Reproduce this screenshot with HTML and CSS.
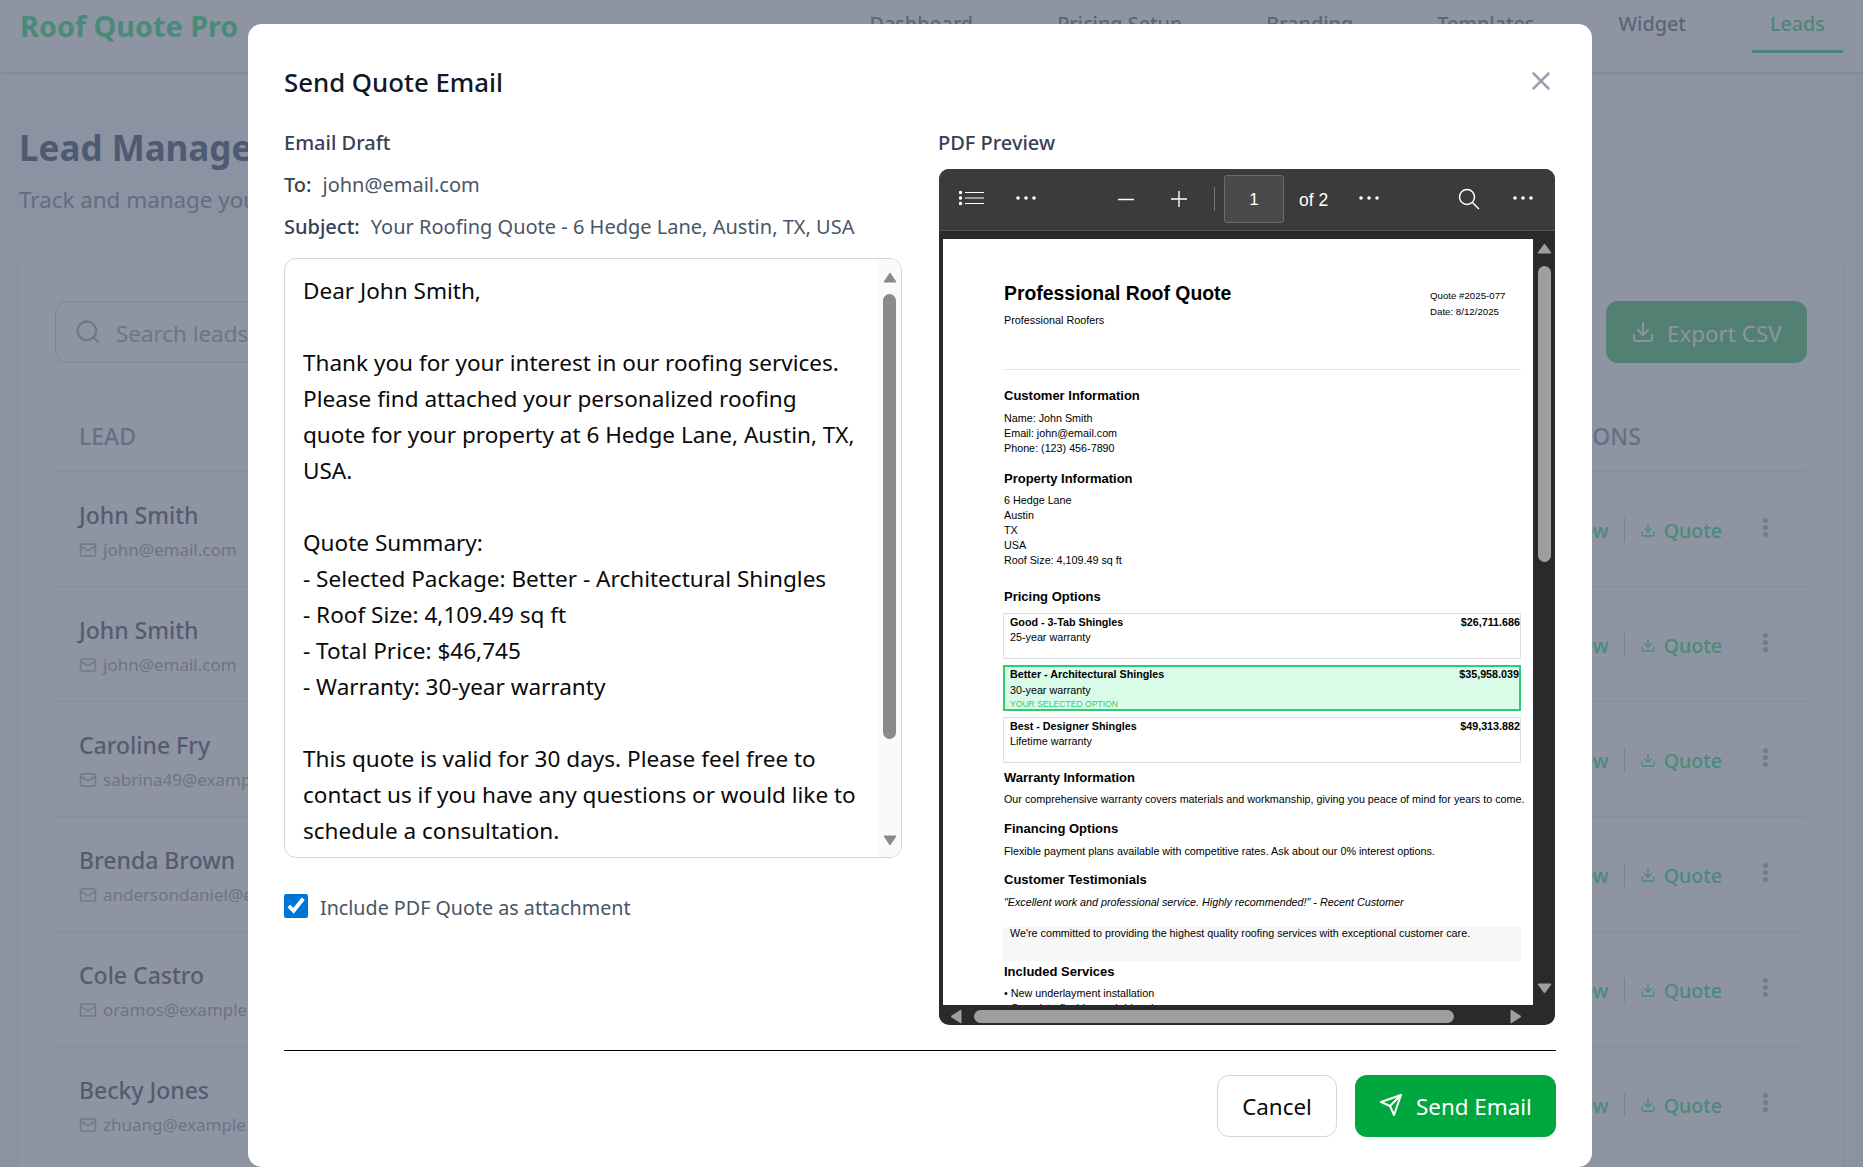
FILE: index.html
```html
<!DOCTYPE html>
<html lang="en">
<head>
<meta charset="utf-8">
<title>Roof Quote Pro</title>
<link rel="stylesheet" href="styles.css">
</head>
<body>
<header class="topbar">
  <div class="logo">Roof Quote Pro</div>
  <nav class="nav">
    <a class="nav-item">Dashboard</a>
    <a class="nav-item">Pricing Setup</a>
    <a class="nav-item">Branding</a>
    <a class="nav-item">Templates</a>
    <a class="nav-item">Widget</a>
    <a class="nav-item active">Leads</a>
  </nav>
</header>
<main class="main">
  <h1 class="page-title">Lead Management</h1>
  <p class="page-sub">Track and manage your leads</p>
  <section class="card">
    <div class="tools">
      <div class="search">
        <svg class="ico-search" viewBox="0 0 24 24"><circle cx="11" cy="11" r="8"/><path d="m21 21-4.3-4.3"/></svg>
        <span>Search leads...</span>
      </div>
      <button class="export">
        <svg class="ico-export" viewBox="0 0 24 24"><path d="M21 15v4a2 2 0 0 1-2 2H5a2 2 0 0 1-2-2v-4"/><path d="m7 10 5 5 5-5"/><path d="M12 15V3"/></svg>
        <span>Export CSV</span>
      </button>
    </div>
    <div class="thead"><span>LEAD</span><span>ACTIONS</span></div>
    <div class="row">
      <div class="lead"><div class="name">John Smith</div><div class="email"><svg class="ico-mail" viewBox="0 0 24 24"><rect x="2" y="4" width="20" height="16" rx="2"/><path d="m22 7-10 6L2 7"/></svg>john@email.com</div></div>
      <div class="actions"><span>View</span><i class="sep"></i><span class="quote"><svg class="ico-dl" viewBox="0 0 24 24"><path d="M21 15v4a2 2 0 0 1-2 2H5a2 2 0 0 1-2-2v-4"/><path d="m7 10 5 5 5-5"/><path d="M12 15V3"/></svg>Quote</span><i class="kebab"></i></div>
    </div>
    <div class="row">
      <div class="lead"><div class="name">John Smith</div><div class="email"><svg class="ico-mail" viewBox="0 0 24 24"><rect x="2" y="4" width="20" height="16" rx="2"/><path d="m22 7-10 6L2 7"/></svg>john@email.com</div></div>
      <div class="actions"><span>View</span><i class="sep"></i><span class="quote"><svg class="ico-dl" viewBox="0 0 24 24"><path d="M21 15v4a2 2 0 0 1-2 2H5a2 2 0 0 1-2-2v-4"/><path d="m7 10 5 5 5-5"/><path d="M12 15V3"/></svg>Quote</span><i class="kebab"></i></div>
    </div>
    <div class="row">
      <div class="lead"><div class="name">Caroline Fry</div><div class="email"><svg class="ico-mail" viewBox="0 0 24 24"><rect x="2" y="4" width="20" height="16" rx="2"/><path d="m22 7-10 6L2 7"/></svg>sabrina49@example.com</div></div>
      <div class="actions"><span>View</span><i class="sep"></i><span class="quote"><svg class="ico-dl" viewBox="0 0 24 24"><path d="M21 15v4a2 2 0 0 1-2 2H5a2 2 0 0 1-2-2v-4"/><path d="m7 10 5 5 5-5"/><path d="M12 15V3"/></svg>Quote</span><i class="kebab"></i></div>
    </div>
    <div class="row">
      <div class="lead"><div class="name">Brenda Brown</div><div class="email"><svg class="ico-mail" viewBox="0 0 24 24"><rect x="2" y="4" width="20" height="16" rx="2"/><path d="m22 7-10 6L2 7"/></svg>andersondaniel@example.com</div></div>
      <div class="actions"><span>View</span><i class="sep"></i><span class="quote"><svg class="ico-dl" viewBox="0 0 24 24"><path d="M21 15v4a2 2 0 0 1-2 2H5a2 2 0 0 1-2-2v-4"/><path d="m7 10 5 5 5-5"/><path d="M12 15V3"/></svg>Quote</span><i class="kebab"></i></div>
    </div>
    <div class="row">
      <div class="lead"><div class="name">Cole Castro</div><div class="email"><svg class="ico-mail" viewBox="0 0 24 24"><rect x="2" y="4" width="20" height="16" rx="2"/><path d="m22 7-10 6L2 7"/></svg>oramos@example.com</div></div>
      <div class="actions"><span>View</span><i class="sep"></i><span class="quote"><svg class="ico-dl" viewBox="0 0 24 24"><path d="M21 15v4a2 2 0 0 1-2 2H5a2 2 0 0 1-2-2v-4"/><path d="m7 10 5 5 5-5"/><path d="M12 15V3"/></svg>Quote</span><i class="kebab"></i></div>
    </div>
    <div class="row">
      <div class="lead"><div class="name">Becky Jones</div><div class="email"><svg class="ico-mail" viewBox="0 0 24 24"><rect x="2" y="4" width="20" height="16" rx="2"/><path d="m22 7-10 6L2 7"/></svg>zhuang@example.com</div></div>
      <div class="actions"><span>View</span><i class="sep"></i><span class="quote"><svg class="ico-dl" viewBox="0 0 24 24"><path d="M21 15v4a2 2 0 0 1-2 2H5a2 2 0 0 1-2-2v-4"/><path d="m7 10 5 5 5-5"/><path d="M12 15V3"/></svg>Quote</span><i class="kebab"></i></div>
    </div>
  </section>
</main>

<div class="overlay">
  <div class="modal">
    <div class="modal-head">
      <h2 class="modal-title">Send Quote Email</h2>
      <svg class="ico-close" viewBox="0 0 24 24"><path d="M18 6 6 18"/><path d="m6 6 12 12"/></svg>
    </div>
    <div class="columns">
      <div class="col">
        <div class="label">Email Draft</div>
        <div class="meta"><b>To:</b>john@email.com</div>
        <div class="meta subject"><b>Subject:</b>Your Roofing Quote - 6 Hedge Lane, Austin, TX, USA</div>
        <div class="draft">
          <div class="draft-text">Dear John Smith,<br><br>Thank you for your interest in our roofing services.<br>Please find attached your personalized roofing<br>quote for your property at 6 Hedge Lane, Austin, TX,<br>USA.<br><br>Quote Summary:<br>- Selected Package: Better - Architectural Shingles<br>- Roof Size: 4,109.49 sq ft<br>- Total Price: $46,745<br>- Warranty: 30-year warranty<br><br>This quote is valid for 30 days. Please feel free to<br>contact us if you have any questions or would like to<br>schedule a consultation.</div>
          <div class="draft-bar">
            <svg class="arrow-v" viewBox="0 0 14 11"><path d="M7 1 13 10H1Z"/></svg>
            <div class="draft-thumb"></div>
            <svg class="arrow-v" viewBox="0 0 14 11"><path d="M1 1H13L7 10Z"/></svg>
          </div>
        </div>
        <label class="attach"><input class="attach-box" type="checkbox" checked>Include PDF Quote as attachment</label>
      </div>
      <div class="col">
        <div class="label">PDF Preview</div>
        <div class="viewer">
          <div class="viewer-bar">
            <svg class="tb-list" viewBox="0 0 25 16"><path d="M6 2.5H25M6 8H25M6 13.5H25"/><circle cx="1.5" cy="2.5" r="1.2"/><circle cx="1.5" cy="8" r="1.2"/><circle cx="1.5" cy="13.5" r="1.2"/></svg>
            <svg class="tb-dots d1" viewBox="0 0 20 4"><circle cx="2" cy="2" r="1.8"/><circle cx="10" cy="2" r="1.8"/><circle cx="18" cy="2" r="1.8"/></svg>
            <svg class="tb-pm minus" viewBox="0 0 18 18"><path d="M1 9.5H17"/></svg>
            <svg class="tb-pm plus" viewBox="0 0 18 18"><path d="M1 9H17M9 1V17"/></svg>
            <i class="tb-sep"></i>
            <div class="tb-page">1</div>
            <div class="tb-of">of 2</div>
            <svg class="tb-dots d2" viewBox="0 0 20 4"><circle cx="2" cy="2" r="1.8"/><circle cx="10" cy="2" r="1.8"/><circle cx="18" cy="2" r="1.8"/></svg>
            <svg class="tb-search" viewBox="0 0 22 22"><circle cx="9" cy="9" r="7.5"/><path d="m14.5 14.5 6.5 6.5"/></svg>
            <svg class="tb-dots d3" viewBox="0 0 20 4"><circle cx="2" cy="2" r="1.8"/><circle cx="10" cy="2" r="1.8"/><circle cx="18" cy="2" r="1.8"/></svg>
          </div>
          <div class="viewer-body">
            <div class="viewer-main">
              <div class="page">
                <div class="doc-head">
                  <div>
                    <div class="doc-title">Professional Roof Quote</div>
                    <div class="doc-company">Professional Roofers</div>
                  </div>
                  <div class="doc-meta">Quote #2025-077<br>Date: 8/12/2025</div>
                </div>
                <hr class="doc-rule">
                <h3 class="doc-h roomy">Customer Information</h3>
                <p class="doc-p">Name: John Smith<br>Email: john@email.com<br>Phone: (123) 456-7890</p>
                <h3 class="doc-h gap-15">Property Information</h3>
                <p class="doc-p">6 Hedge Lane<br>Austin<br>TX<br>USA<br>Roof Size: 4,109.49 sq ft</p>
                <h3 class="doc-h gap-21 tight">Pricing Options</h3>
                <div class="opt"><div class="opt-row"><b>Good - 3-Tab Shingles</b><b>$26,711.686</b></div><div class="opt-sub">25-year warranty</div></div>
                <div class="opt selected"><div class="opt-row"><b>Better - Architectural Shingles</b><b>$35,958.039</b></div><div class="opt-sub">30-year warranty</div><div class="opt-tag">YOUR SELECTED OPTION</div></div>
                <div class="opt"><div class="opt-row"><b>Best - Designer Shingles</b><b>$49,313.882</b></div><div class="opt-sub">Lifetime warranty</div></div>
                <h3 class="doc-h gap-7">Warranty Information</h3>
                <p class="doc-p">Our comprehensive warranty covers materials and workmanship, giving you peace of mind for years to come.</p>
                <h3 class="doc-h gap-14 roomy">Financing Options</h3>
                <p class="doc-p">Flexible payment plans available with competitive rates. Ask about our 0% interest options.</p>
                <h3 class="doc-h gap-13 roomy">Customer Testimonials</h3>
                <p class="doc-p quote-line">"Excellent work and professional service. Highly recommended!" - Recent Customer</p>
                <div class="doc-box">We're committed to providing the highest quality roofing services with exceptional customer care.</div>
                <h3 class="doc-h gap-3">Included Services</h3>
                <p class="doc-p">• New underlayment installation<br>• Complete flashing and drip edge</p>
              </div>
              <div class="hbar">
                <svg class="arrow-h" viewBox="0 0 12 15"><path d="M11 1V14L1 7.5Z"/></svg>
                <div class="hthumb"></div>
                <svg class="arrow-h" viewBox="0 0 12 15"><path d="M1 1V14L11 7.5Z"/></svg>
              </div>
            </div>
            <div class="vbar">
              <svg class="arrow-pdf" viewBox="0 0 15 11"><path d="M7.5 1 14 10H1Z"/></svg>
              <div class="vthumb"></div>
              <svg class="arrow-pdf" viewBox="0 0 15 11"><path d="M1 1H14L7.5 10Z"/></svg>
            </div>
          </div>
        </div>
      </div>
    </div>
    <div class="modal-foot">
      <button class="btn-cancel">Cancel</button>
      <button class="btn-send"><svg class="ico-send" viewBox="0 0 24 24"><path d="m22 2-7 20-4-9-9-4Z"/><path d="M22 2 11 13"/></svg>Send Email</button>
    </div>
  </div>
</div>
</body>
</html>
```
FILE: styles.css
```css
* { box-sizing: border-box; }
html, body { margin: 0; height: 1167px; overflow: hidden; }
body { background: #f8fafc; font-family: "Noto Sans", "Liberation Sans", sans-serif; color: #111; }

/* background page */
.topbar { height: 72px; background: #fff; display: flex; justify-content: space-between; padding: 0 20px; box-shadow: 0 1px 3px rgba(0,0,0,.12); }
.logo { font-size: 28.8px; font-weight: 700; line-height: 52px; color: #76ebab; }
.nav { display: flex; gap: 48px; }
.nav-item { height: 53px; padding: 8px 18px 0; line-height: 32px; font-size: 19.8px; font-weight: 500; color: #9aa1ab; border-bottom: 3px solid transparent; }
.nav-item.active { color: #7ce3ab; border-bottom-color: #7ce3ab; }
.main { padding: 54px 20px 0 19px; }
.page-title { margin: 0; font-size: 35px; line-height: 44px; font-weight: 700; color: #808b9f; }
.page-sub { margin: 14px 0 0; font-size: 22.4px; line-height: 32px; color: #a9b0b8; }
.card { margin-top: 42px; padding: 43px 36px 40px; background: #fff; border-radius: 12px; box-shadow: 0 1px 3px rgba(0,0,0,.06); }
.tools { display: flex; justify-content: space-between; height: 62px; }
.search { width: 560px; display: flex; align-items: center; gap: 14px; padding: 2px 0 0 18px; border: 1px solid #dde1e6; border-radius: 12px; font-size: 22.4px; color: #bcc1c8; }
.ico-search { width: 28px; height: 28px; margin-top: -2px; fill: none; stroke: #c0c6cd; stroke-width: 2; }
.export { width: 201px; border: 0; border-radius: 12px; background: #86d7a1; color: #fafffb; font: 400 22.4px "Noto Sans", sans-serif; display: flex; align-items: center; gap: 12px; padding-left: 25px; }
.export span { padding-top: 2px; }
.ico-export { width: 24px; height: 24px; fill: none; stroke: #fafffb; stroke-width: 2; stroke-linecap: round; stroke-linejoin: round; flex: none; }
.thead { display: grid; grid-template-columns: 1fr 265px; margin-top: 61px; padding: 0 0 23px 24px; font-size: 23px; line-height: 24px; font-weight: 500; color: #b0b7bf; border-bottom: 1px solid #eef1f4; }
.row { display: grid; grid-template-columns: 1fr 259px; height: 115px; padding-left: 24px; border-bottom: 1px solid #eef1f4; }
.lead { padding-top: 29px; }
.name { font-size: 23px; line-height: 28px; font-weight: 500; color: #888f9d; }
.email { display: flex; align-items: center; gap: 6px; margin-top: 9px; font-size: 17px; line-height: 24px; color: #bbbfc6; }
.ico-mail { width: 18px; height: 18px; fill: none; stroke: #c4c8ce; stroke-width: 2; }
.actions { display: flex; justify-content: flex-end; align-items: center; padding: 2px 39px 0 0; font-size: 19.6px; font-weight: 500; color: #76ebab; }
.sep { width: 1px; height: 24px; margin: 0 15px; background: #d4d8dd; }
.quote { display: flex; align-items: center; gap: 8px; margin-right: 41px; }
.ico-dl { width: 16px; height: 16px; fill: none; stroke: #76ebab; stroke-width: 2; stroke-linecap: round; stroke-linejoin: round; }
.kebab { width: 5px; height: 5px; margin-bottom: 6px; border-radius: 50%; background: #c6cad0; box-shadow: 0 -7px 0 #c6cad0, 0 7px 0 #c6cad0; }

/* dialog */
.overlay { position: fixed; inset: 0; display: flex; justify-content: center; align-items: flex-start; padding: 24px 23px 0 0; background: rgba(30,41,69,.5); }
.modal { width: 1344px; height: 1143px; padding: 36px 36px 30px; background: #fff; border-radius: 14px; }
.modal-head { height: 44px; display: flex; justify-content: space-between; align-items: center; margin-bottom: 24px; }
.modal-title { margin: 0; font-size: 25.8px; line-height: 44px; font-weight: 500; color: #101828; }
.ico-close { width: 30px; height: 30px; margin: -2px 0 0 0; fill: none; stroke: #99a1af; stroke-width: 2; stroke-linecap: round; }
.columns { display: grid; grid-template-columns: 618px 618px; gap: 36px; height: 897px; }
.col { min-width: 0; }
.label { height: 30px; margin-bottom: 11px; font-size: 20px; line-height: 30px; font-weight: 500; color: #364153; }
.meta { height: 30px; font-size: 20px; line-height: 32px; color: #4a5565; }
.meta b { font-weight: 500; margin-right: 11px; color: #364153; }
.subject { margin-top: 12px; }
.draft { display: flex; height: 600px; margin-top: 17px; border: 1px solid #d1d5dc; border-radius: 12px; overflow: hidden; }
.draft-text { flex: 1; padding: 14px 0 0 18px; font-size: 22.55px; line-height: 36px; color: #0a0a0a; white-space: nowrap; }
.draft-bar { width: 23px; flex: none; background: #fafafa; display: flex; flex-direction: column; align-items: center; padding-top: 13px; }
.arrow-v { width: 14px; height: 11px; fill: #8a8a8a; stroke: #8a8a8a; stroke-width: 1; stroke-linejoin: round; }
.draft-thumb { width: 13px; height: 445px; margin: 11px 0 96px; border-radius: 7px; background: #8a8a8a; }
.attach { display: flex; align-items: center; gap: 12px; margin-top: 36px; height: 26px; font-size: 19.7px; color: #4a5565; }
.attach-box { width: 24px; height: 24px; margin: 0 0 2px; accent-color: #0075d8; }

/* pdf viewer */
.viewer { height: 856px; border-radius: 10px; overflow: hidden; background: #2a2a2a; margin: 0 1px; display: flex; flex-direction: column; font-family: "Liberation Sans", Arial, sans-serif; }
.viewer-bar { height: 62px; flex: none; position: relative; background: #3b3b3b; border-bottom: 1px solid #555; }
.viewer-bar > * { position: absolute; }
.tb-list { left: 20px; top: 21px; width: 25px; height: 16px; fill: #fff; stroke: #fff; stroke-width: 1.1; }
.tb-dots { top: 27px; width: 20px; height: 4px; fill: #fff; }
.d1 { left: 77px; }
.d2 { left: 420px; }
.d3 { left: 574px; }
.tb-pm { top: 21px; width: 18px; height: 18px; stroke: #fff; stroke-width: 1.4; fill: none; }
.minus { left: 178px; }
.plus { left: 231px; }
.tb-sep { left: 275px; top: 18px; width: 1px; height: 24px; background: #777; }
.tb-page { left: 285px; top: 6px; width: 60px; height: 48px; border: 1px solid #6b6b6b; border-radius: 3px; background: #4a4a4a; color: #fff; font-size: 17px; line-height: 48px; text-align: center; }
.tb-of { left: 360px; top: 17px; color: #fff; font-size: 17.5px; line-height: 28px; }
.tb-search { left: 519px; top: 19px; width: 22px; height: 22px; fill: none; stroke: #fff; stroke-width: 1.5; }
.viewer-body { flex: 1; display: flex; min-height: 0; }
.viewer-main { width: 594px; flex: none; display: flex; flex-direction: column; padding-left: 4px; }
.page { flex: none; height: 766px; margin-top: 8px; padding: 42px 12px 0 61px; background: #fff; overflow: hidden; color: #000; }
.doc-head { display: flex; justify-content: space-between; height: 88px; }
.doc-title { font-size: 19.4px; line-height: 24px; font-weight: 700; }
.doc-company { margin-top: 8px; font-size: 10.8px; line-height: 15px; }
.doc-meta { width: 91px; margin-top: 7px; font-size: 9.7px; line-height: 16px; white-space: nowrap; }
.doc-rule { margin: 0 0 18px; height: 1px; border: 0; background: #e3e3e3; }
.doc-h { margin: 0 0 6px; font-size: 13px; line-height: 16px; font-weight: 700; }
.doc-h.roomy { margin-bottom: 7px; }
.doc-h.tight { margin-bottom: 8px; }
.gap-3 { margin-top: 3px; }
.gap-7 { margin-top: 7px; }
.gap-13 { margin-top: 13px; }
.gap-14 { margin-top: 14px; }
.gap-15 { margin-top: 15px; }
.gap-21 { margin-top: 21px; }
.doc-p { margin: 0; font-size: 10.75px; line-height: 15px; white-space: nowrap; }
.quote-line { font-style: italic; }
.opt { height: 46px; margin-bottom: 6px; margin-left: -1px; padding: 1px 0 0 6px; border: 1px solid #ddd; font-size: 10.75px; line-height: 15px; }
.opt-row { display: flex; justify-content: space-between; }
.opt.selected { padding-top: 0; border: 2px solid #2ecc71; padding-left: 5px; padding-right: 0; background: #d9fbe8; }
.selected .opt-sub { line-height: 16px; margin-top: 0; }
.opt-tag { font-size: 8.6px; line-height: 13px; color: #2ecc71; }
.doc-box { height: 34px; margin: 17px 0 0 -1px; padding: 0 0 0 7px; background: #f7f7f7; font-size: 10.75px; line-height: 13px; white-space: nowrap; }
.hbar { height: 19px; display: flex; align-items: center; padding: 4px 11px 0 7px; }
.arrow-h { width: 12px; height: 15px; fill: #9e9e9e; stroke: #9e9e9e; stroke-linejoin: round; }
.hthumb { width: 480px; height: 13px; margin: 0 56px 0 12px; border-radius: 7px; background: #9e9e9e; }
.vbar { width: 22px; flex: none; display: flex; flex-direction: column; align-items: center; padding-top: 12px; }
.arrow-pdf { width: 15px; height: 11px; fill: #9e9e9e; stroke: #9e9e9e; stroke-linejoin: round; }
.vthumb { width: 13px; height: 296px; margin: 12px 0 421px; border-radius: 7px; background: #9e9e9e; }

/* footer */
.modal-foot { margin-top: 25px; padding-top: 24px; border-top: 1px solid #000; display: flex; justify-content: flex-end; gap: 18px; }
.btn-cancel, .btn-send { height: 62px; border-radius: 12px; font: 400 22.4px "Noto Sans", sans-serif; padding-top: 2px; }
.btn-cancel { width: 120px; background: #fff; border: 1px solid #d1d5dc; color: #0a0a0a; }
.btn-send { width: 201px; background: #00a63e; border: 0; color: #fff; display: flex; align-items: center; gap: 13px; padding-left: 24px; }
.ico-send { width: 24px; height: 24px; margin-top: -3px; fill: none; stroke: #fff; stroke-width: 2; stroke-linecap: round; stroke-linejoin: round; flex: none; }
```
